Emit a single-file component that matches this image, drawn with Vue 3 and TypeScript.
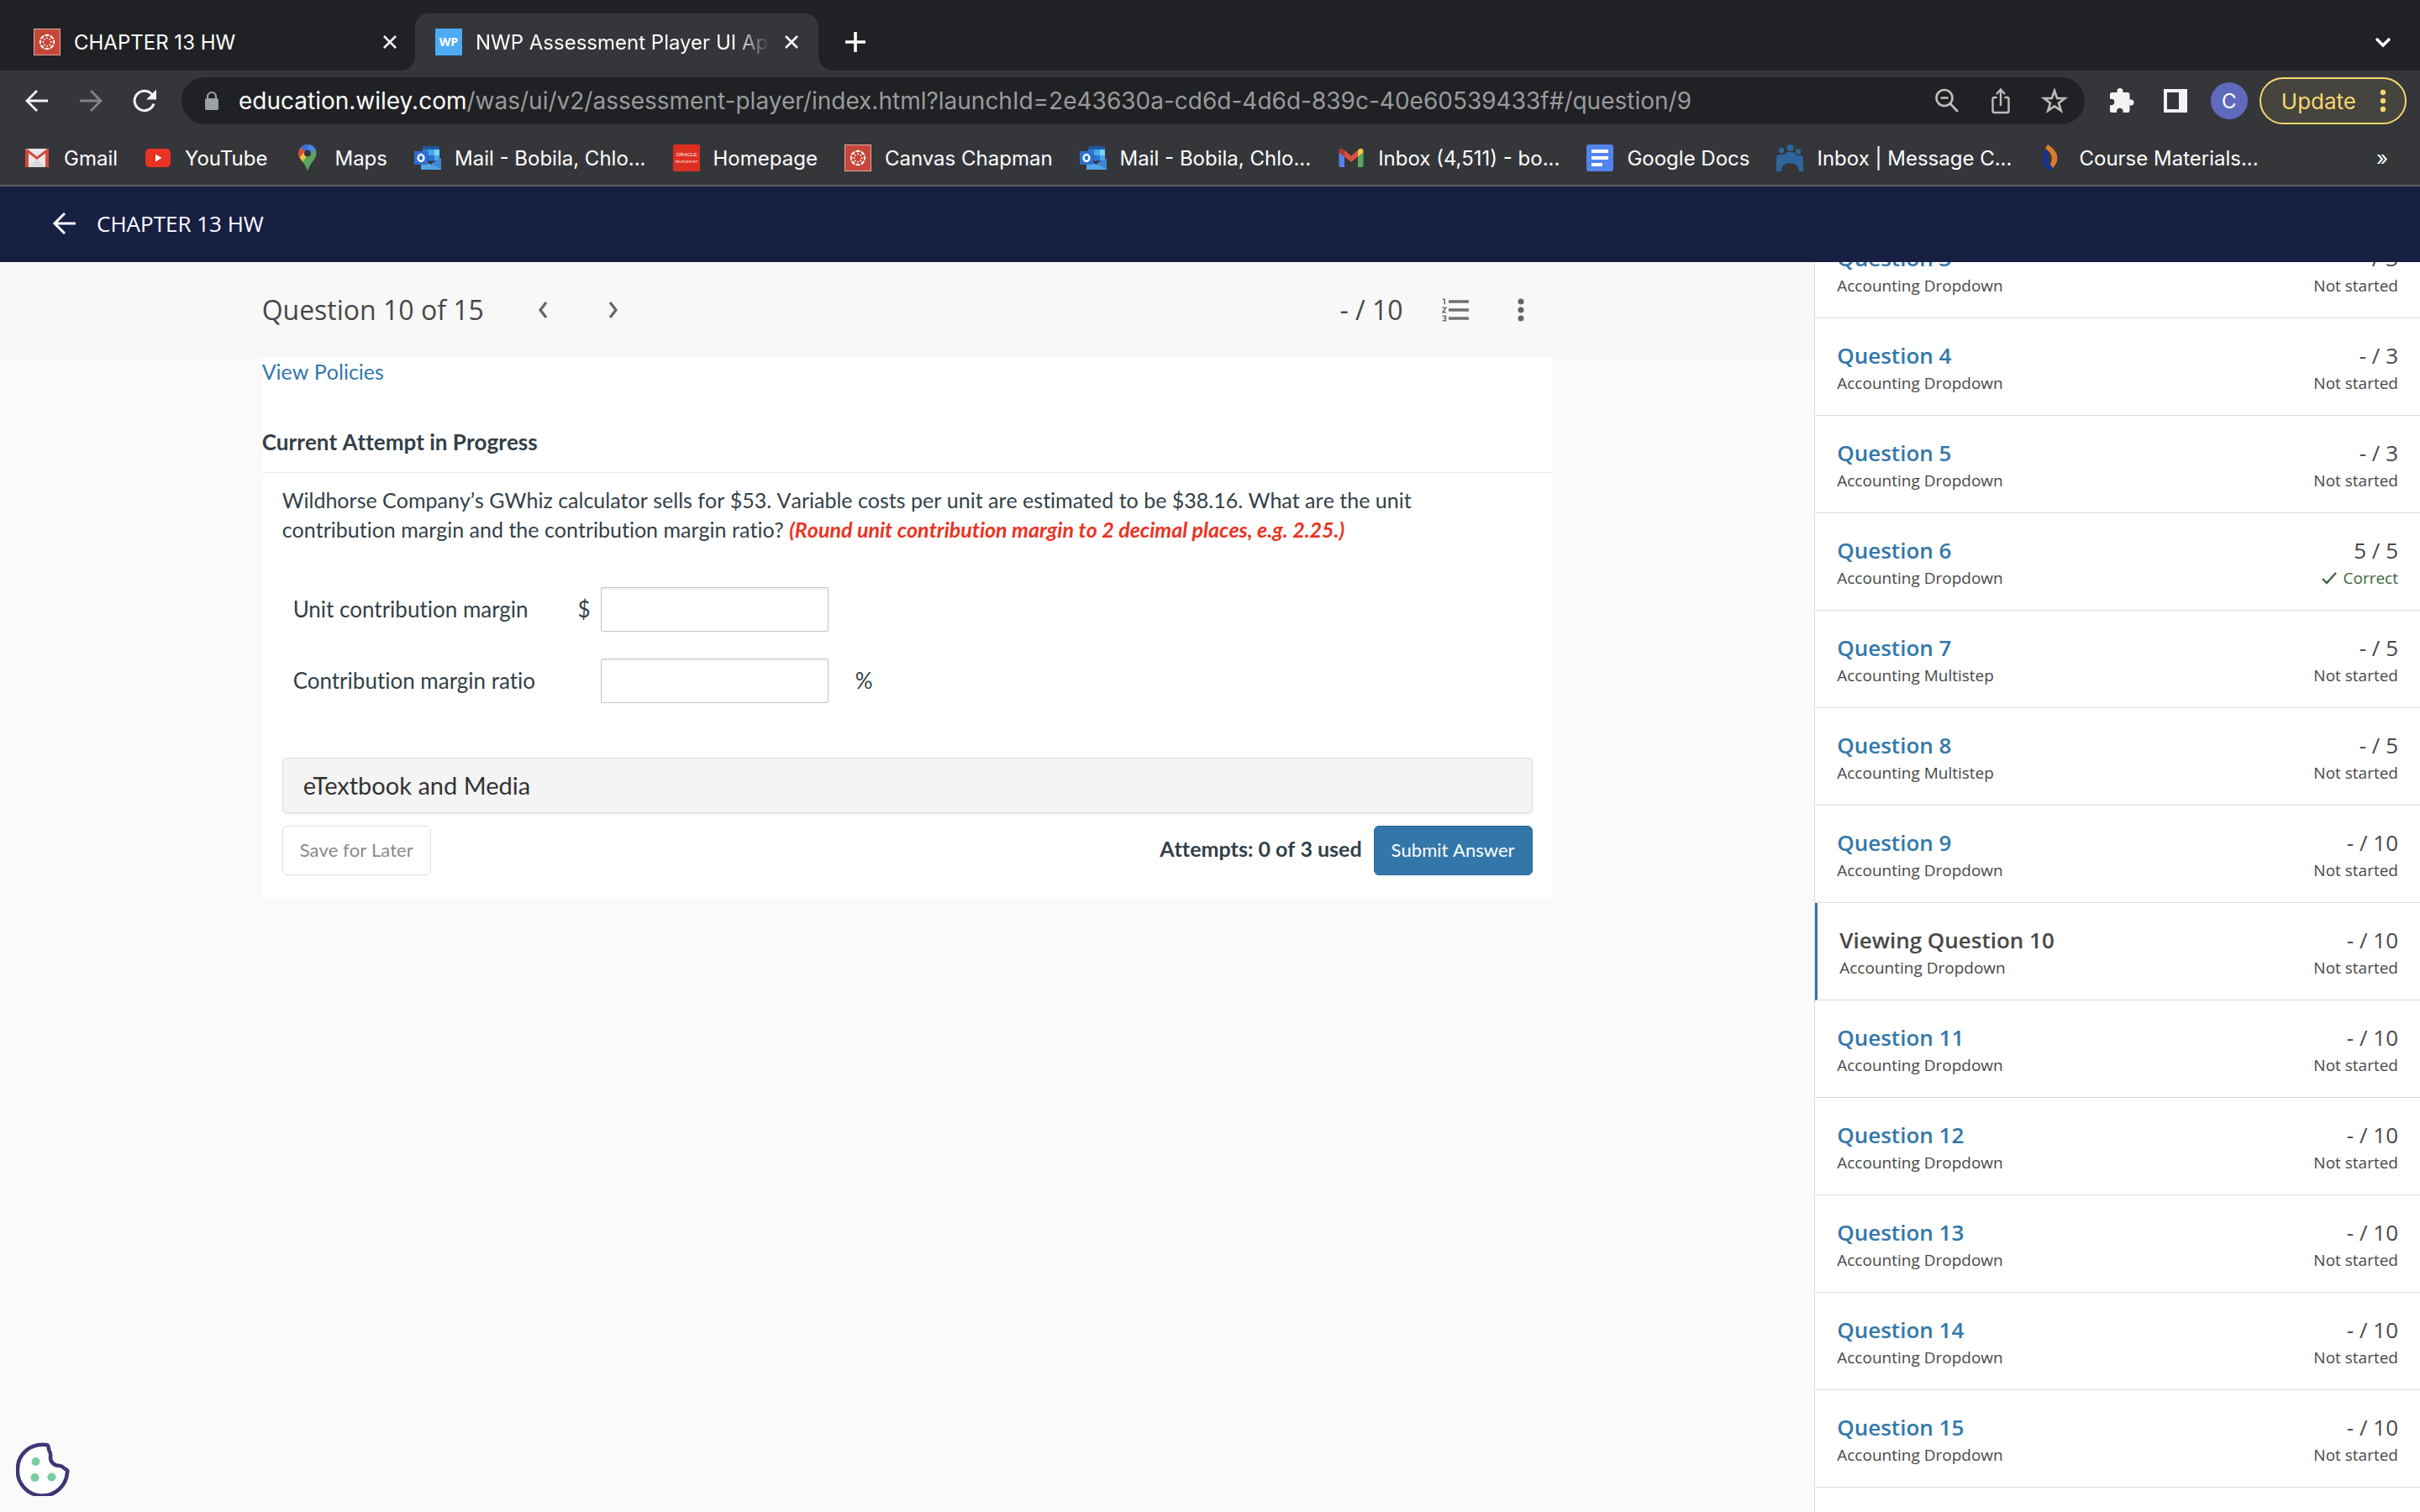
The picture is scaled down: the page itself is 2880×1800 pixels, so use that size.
<script setup lang="ts">
import { ref } from 'vue'

interface Bookmark {
  icon: string
  label: string
}

interface Question {
  id: number
  kind: string
  score: string
  status: string
}

const bookmarks: Bookmark[] = [
  { icon: 'gmail-old', label: 'Gmail' },
  { icon: 'youtube', label: 'YouTube' },
  { icon: 'maps', label: 'Maps' },
  { icon: 'outlook', label: 'Mail - Bobila, Chlo...' },
  { icon: 'oracle', label: 'Homepage' },
  { icon: 'canvas', label: 'Canvas Chapman' },
  { icon: 'outlook', label: 'Mail - Bobila, Chlo...' },
  { icon: 'gmail', label: 'Inbox (4,511) - bo...' },
  { icon: 'docs', label: 'Google Docs' },
  { icon: 'people', label: 'Inbox | Message C...' },
  { icon: 'course', label: 'Course Materials...' },
]

const drop = 'Accounting Dropdown'
const multi = 'Accounting Multistep'
const idle = 'Not started'

const questions: Question[] = [
  { id: 3, kind: drop, score: '- / 3', status: idle },
  { id: 4, kind: drop, score: '- / 3', status: idle },
  { id: 5, kind: drop, score: '- / 3', status: idle },
  { id: 6, kind: drop, score: '5 / 5', status: 'Correct' },
  { id: 7, kind: multi, score: '- / 5', status: idle },
  { id: 8, kind: multi, score: '- / 5', status: idle },
  { id: 9, kind: drop, score: '- / 10', status: idle },
  { id: 10, kind: drop, score: '- / 10', status: idle },
  { id: 11, kind: drop, score: '- / 10', status: idle },
  { id: 12, kind: drop, score: '- / 10', status: idle },
  { id: 13, kind: drop, score: '- / 10', status: idle },
  { id: 14, kind: drop, score: '- / 10', status: idle },
  { id: 15, kind: drop, score: '- / 10', status: idle },
]

const current = 10
const unitMargin = ref('')
const marginRatio = ref('')
const spokes = [0, 45, 90, 135, 180, 225, 270, 315]
</script>

<template>
  <div class="page">
    <svg class="defs" aria-hidden="true">
      <symbol id="i-canvas" viewBox="0 0 32 32">
        <rect width="32" height="32" fill="#e3a79f" />
        <rect x="1" y="1" width="30" height="30" fill="#c5473a" />
        <g fill="#fff">
          <template v-for="a in spokes" :key="a">
            <path d="M12.9 7.4a9.2 9.2 0 0 1 6.2 0a3.2 2.5 0 0 1-6.2 0z" :transform="`rotate(${a} 16 16)`" />
            <circle cx="16" cy="11.4" r="0.9" :transform="`rotate(${a} 16 16)`" />
          </template>
        </g>
      </symbol>
      <symbol id="i-gmail-old" viewBox="0 0 32 32">
        <rect x="2" y="5" width="28" height="22" rx="2" fill="#e9e9e9" />
        <path d="M5 27l11-9 11 9z" fill="#d9d9d9" />
        <path d="M2 7a2 2 0 0 1 2-2l12 9.500 12-9.500a2 2 0 0 1 2 2v18a2 2 0 0 1-2 2h-2V10.500L16 18 6 10.500V27H4a2 2 0 0 1-2-2z" fill="#d04a3e" />
      </symbol>
      <symbol id="i-youtube" viewBox="0 0 32 32">
        <rect x="1" y="5" width="30" height="22" rx="5" fill="#ea3323" />
        <path d="M13 11.500v9l7.500-4.500z" fill="#fff" />
      </symbol>
      <symbol id="i-maps" viewBox="0 0 32 32">
        <path d="M16 0C10 0 5.500 4.500 5.500 10.500c0 4 2 6.500 4.500 10 3 4 4.500 6.500 6 11.500 1.500-5 3-7.500 6-11.500 2.500-3.500 4.500-6 4.500-10C26.500 4.500 22 0 16 0z" fill="#58a55c" />
        <path d="M5.500 10.500c0 4 2 6.500 4.500 10l10-12L12 7 7 8z" fill="#f1bd42" />
        <path d="M8 3.700a10.500 10.500 0 0 0-2.500 6.800c0 1.800.4 3.300 1 4.700L13 8z" fill="#d85140" />
        <path d="M8 3.700A10.400 10.400 0 0 1 19.300.600L13 8z" fill="#3b6fd8" />
        <path d="M19.300.600a10.500 10.500 0 0 1 6 5L19 13 13 8z" fill="#5383ec" />
        <circle cx="16" cy="10.500" r="4" fill="#35363a" />
      </symbol>
      <symbol id="i-outlook" viewBox="0 0 32 32">
        <rect x="10" y="2" width="20" height="18" fill="#2056a0" />
        <rect x="10" y="6" width="7" height="6" fill="#2f7fd6" />
        <rect x="17" y="6" width="7" height="7" fill="#4aa7e8" />
        <rect x="24" y="6" width="6" height="7" fill="#77d4fb" />
        <rect x="17" y="13" width="7" height="6" fill="#2b76cf" />
        <rect x="24" y="13" width="6" height="6" fill="#4aa7e8" />
        <path d="M8 30V18l12 6 12-7v13z" fill="#52a7e3" />
        <path d="M20 23l12-7v14z" fill="#4086d6" />
        <rect y="8" width="16" height="16" rx="1" fill="#2f6fce" />
        <ellipse cx="8" cy="16" rx="3.400" ry="4" fill="none" stroke="#fff" stroke-width="2.400" />
      </symbol>
      <symbol id="i-gmail" viewBox="0 0 32 32">
        <path d="M1.500 9v16a2 2 0 0 0 2 2H8V13z" fill="#5383ec" />
        <path d="M30.500 9v16a2 2 0 0 1-2 2H24V13z" fill="#58a55c" />
        <path d="M8 7l8 6.500L24 7v7.500L16 21l-8-6.500z" fill="#d85140" />
        <path d="M8 7v7.500L1.500 9.500V8c0-3 3-4.200 5-2.500z" fill="#b3362b" />
        <path d="M24 7v7.500l6.500-5V8c0-3-3-4.200-5-2.500z" fill="#f4c343" />
      </symbol>
      <symbol id="i-docs" viewBox="0 0 32 32">
        <rect width="32" height="32" rx="3" fill="#5383ec" />
        <path d="M6 6h20v4H6zM6 14h20v4H6zM6 22h13v4H6z" fill="#fff" />
      </symbol>
      <symbol id="i-people" viewBox="0 0 32 32">
        <g fill="#2d659c">
          <circle cx="6" cy="7" r="3.200" />
          <circle cx="16.500" cy="4" r="4" />
          <circle cx="26" cy="8.500" r="3.200" />
          <path d="M0 32V16q0-4 4-4h6q1-3 3-3h7q2 0 3 4h5q4 0 4 4v15h-5q-1-10-11-10T6 32z" />
        </g>
      </symbol>
      <symbol id="i-course" viewBox="0 0 32 32">
        <path d="M10 5C4 10 3 19 8 27l4 5 5-4c-7-7-7-14-4-20z" fill="#17338c" />
        <path d="M11 0l-3 5c7 4 10 10 6 19l3 4c9-9 7-20-6-28z" fill="#dc7a2b" />
      </symbol>
    </svg>

    <header class="browser">
      <div class="tabs">
        <div class="tab tab-idle">
          <svg class="i32"><use href="#i-canvas" /></svg>
          <span class="tab-title">CHAPTER 13 HW</span>
          <button class="ghost" type="button" aria-label="Close tab">
            <svg class="i16" viewBox="0 0 16 16"><path d="M1 1l14 14M15 1L1 15" stroke="#f1f3f4" stroke-width="2.600" /></svg>
          </button>
        </div>
        <div class="tab tab-active">
          <span class="wp">WP</span>
          <span class="tab-title fade">NWP Assessment Player UI App</span>
          <button class="ghost" type="button" aria-label="Close tab">
            <svg class="i16" viewBox="0 0 16 16"><path d="M1 1l14 14M15 1L1 15" stroke="#f1f3f4" stroke-width="2.600" /></svg>
          </button>
        </div>
        <button class="ghost new-tab" type="button" aria-label="New tab">
          <svg class="i24" viewBox="0 0 24 24"><path d="M12 0v24M0 12h24" stroke="#fff" stroke-width="3.600" /></svg>
        </button>
        <button class="ghost tab-search" type="button" aria-label="Search tabs">
          <svg class="i24" viewBox="0 0 24 24"><path d="M4 8l8 8 8-8" fill="none" stroke="#fff" stroke-width="3.400" /></svg>
        </button>
      </div>

      <div class="toolbar">
        <div class="nav">
          <button class="ghost" type="button" aria-label="Back">
            <svg class="i32" viewBox="0 0 32 32"><path d="M29 16H5M16 4L4 16l12 12" fill="none" stroke="#f1f3f4" stroke-width="2.800" /></svg>
          </button>
          <button class="ghost" type="button" aria-label="Forward">
            <svg class="i32" viewBox="0 0 32 32"><path d="M3 16h24M16 4l12 12-12 12" fill="none" stroke="#828386" stroke-width="2.800" /></svg>
          </button>
          <button class="ghost" type="button" aria-label="Reload">
            <svg class="i32" viewBox="0 0 32 32"><path d="M27 19.500A11.700 11.700 0 1 1 24.500 8" fill="none" stroke="#f1f3f4" stroke-width="3" /><path d="M30 2.500v12H18z" fill="#f1f3f4" /></svg>
          </button>
        </div>
        <div class="omnibox">
          <svg class="i24" viewBox="0 0 24 24"><path d="M7 11V7a5 5 0 0 1 10 0v4" fill="none" stroke="#9aa0a6" stroke-width="2.200" /><rect x="4" y="9" width="16" height="14" rx="2" fill="#9aa0a6" /></svg>
          <span class="url"><b>education.wiley.com</b>/was/ui/v2/assessment-player/index.html?launchId=2e43630a-cd6d-4d6d-839c-40e60539433f#/question/9</span>
          <button class="ghost" type="button" aria-label="Zoom">
            <svg class="i32" viewBox="0 0 32 32"><g fill="none" stroke="#bdbdbe" stroke-width="2.600"><circle cx="13" cy="12.500" r="9.500" /><path d="M19.500 19l9.500 10M8.500 12.500h9" /></g></svg>
          </button>
          <button class="ghost" type="button" aria-label="Share">
            <svg class="i32" viewBox="0 0 32 32"><g fill="none" stroke="#bdbdbe" stroke-width="2.400"><path d="M11.500 12H8.500a2 2 0 0 0-2 2v14a2 2 0 0 0 2 2h15a2 2 0 0 0 2-2V14a2 2 0 0 0-2-2h-3M16 22V3M11 8l5-5.500L21 8" /></g></svg>
          </button>
          <button class="ghost" type="button" aria-label="Bookmark this page">
            <svg class="i32" viewBox="0 0 32 32"><path d="M16 4l3.100 8.900 9.400.2-7.500 5.700 2.800 9-7.800-5.400-7.800 5.400 2.800-9-7.500-5.700 9.400-.2z" fill="none" stroke="#bdbdbe" stroke-width="2.600" /></svg>
          </button>
        </div>
        <div class="tools">
          <button class="ghost" type="button" aria-label="Extensions">
            <svg class="i32" viewBox="0 0 32 32"><path d="M27 14.500h-1.500V8.500a2.500 2.500 0 0 0-2.500-2.500h-5.500V4.500a3.500 3.500 0 0 0-7 0V6H4.500A2.500 2.500 0 0 0 2 8.500v5.200h1.500a3.800 3.800 0 0 1 0 7.600H2v6.200A2.500 2.500 0 0 0 4.500 30H10v-1.500a3.800 3.800 0 0 1 7.600 0V30H23a2.500 2.500 0 0 0 2.500-2.500v-6H27a3.500 3.500 0 0 0 0-7z" fill="#f1f3f4" /></svg>
          </button>
          <button class="ghost" type="button" aria-label="Side panel">
            <svg class="i32" viewBox="0 0 32 32"><path d="M2 2h28v28H2zm4 4v20h14V6z" fill="#f1f3f4" fill-rule="evenodd" /></svg>
          </button>
        </div>
        <button class="avatar" type="button">C</button>
        <button class="update" type="button">
          Update
          <svg class="i32" viewBox="0 0 32 32"><g fill="#f7d66e"><circle cx="16" cy="6" r="3.200" /><circle cx="16" cy="16" r="3.200" /><circle cx="16" cy="26" r="3.200" /></g></svg>
        </button>
      </div>

      <nav class="bookmarks">
        <a v-for="(b, i) in bookmarks" :key="i" class="bookmark" href="#">
          <svg v-if="b.icon === 'oracle'" class="i32" viewBox="0 0 32 32">
            <rect width="32" height="32" rx="2" fill="#dd2f21" />
            <text x="16" y="14" text-anchor="middle" font-family="Liberation Sans, sans-serif" font-size="6" fill="#fff">ORACLE</text>
            <text x="16" y="22" text-anchor="middle" font-family="Liberation Sans, sans-serif" font-size="4" fill="#fff">PEOPLESOFT</text>
          </svg>
          <svg v-else class="i32"><use :href="`#i-${b.icon}`" /></svg>
          <span>{{ b.label }}</span>
        </a>
        <button class="ghost more" type="button" aria-label="More bookmarks">»</button>
      </nav>
    </header>

    <div class="course-bar">
      <button class="ghost" type="button" aria-label="Back to course">
        <svg class="i32" viewBox="0 0 32 32"><path d="M29 16H5M16 4L4 16l12 12" fill="none" stroke="#fff" stroke-width="3" /></svg>
      </button>
      <h1>CHAPTER 13 HW</h1>
    </div>

    <div class="body">
      <main class="main">
        <div class="question-bar">
          <div class="column bar-inner">
            <h2>Question 10 of 15</h2>
            <div class="pager">
              <button class="ghost" type="button" aria-label="Previous question">
                <svg class="i32" viewBox="0 0 32 32"><path d="M20 7l-7 9 7 9" fill="none" stroke="#666" stroke-width="3.200" /></svg>
              </button>
              <button class="ghost" type="button" aria-label="Next question">
                <svg class="i32" viewBox="0 0 32 32"><path d="M12 7l7 9-7 9" fill="none" stroke="#666" stroke-width="3.200" /></svg>
              </button>
            </div>
            <span class="score">- / 10</span>
            <button class="ghost" type="button" aria-label="Question list">
              <svg class="i32" viewBox="0 0 32 32">
                <path d="M8 6h24M8 16h24M8 26h24" stroke="#707070" stroke-width="3.400" />
                <path d="M1 3.200h2.200V9.500M.500 13.200h4.300L.800 18.800h4.500M.500 23.200h4v5.600h-4M2 26h2.500" fill="none" stroke="#707070" stroke-width="1.600" />
              </svg>
            </button>
            <button class="ghost" type="button" aria-label="More options">
              <svg class="i32" viewBox="0 0 32 32"><g fill="#666"><circle cx="16" cy="6" r="3.500" /><circle cx="16" cy="16" r="3.500" /><circle cx="16" cy="26" r="3.500" /></g></svg>
            </button>
          </div>
        </div>

        <article class="column card">
          <a class="policies" href="#">View Policies</a>
          <h3>Current Attempt in Progress</h3>
          <section class="problem">
            <p>
              Wildhorse Company’s GWhiz calculator sells for $53. Variable costs per unit are estimated to be $38.16. What are the unit contribution margin and the contribution margin ratio?
              <em>(Round unit contribution margin to 2 decimal places, e.g. 2.25.)</em>
            </p>
            <div class="answers">
              <div class="answer">
                <label for="unit-margin">Unit contribution margin</label>
                <span class="prefix">$</span>
                <input id="unit-margin" v-model="unitMargin" type="text" />
              </div>
              <div class="answer">
                <label for="margin-ratio">Contribution margin ratio</label>
                <span class="prefix"></span>
                <input id="margin-ratio" v-model="marginRatio" type="text" />
                <span class="suffix">%</span>
              </div>
            </div>
            <button class="media" type="button">eTextbook and Media</button>
            <div class="actions">
              <button class="btn save" type="button">Save for Later</button>
              <strong>Attempts: 0 of 3 used</strong>
              <button class="btn submit" type="button">Submit Answer</button>
            </div>
          </section>
        </article>

        <button class="ghost cookie" type="button" aria-label="Cookie preferences">
          <svg viewBox="0 0 64 64">
            <path d="M36 3C17 1 2 14 2 32a29.500 29.500 0 0 0 59 4c1-2 0-3-2-4-3-1-3-4-7-4-6 0-11-4-11-10 0-3 1-4-1-7s0-8-4-8z" fill="#fff" stroke="#3c3775" stroke-width="4.500" stroke-linejoin="round" />
            <g fill="#77cf9c"><circle cx="23.500" cy="23" r="5" /><circle cx="22.500" cy="42" r="5" /><circle cx="42.500" cy="41.500" r="5" /></g>
          </svg>
        </button>
      </main>

      <aside class="side">
        <ul>
          <li v-for="q in questions" :key="q.id" :class="{ active: q.id === current }">
            <div>
              <strong v-if="q.id === current" class="name">Viewing Question {{ q.id }}</strong>
              <a v-else class="name" href="#">Question {{ q.id }}</a>
              <span class="small">{{ q.kind }}</span>
            </div>
            <div class="result">
              <span class="points">{{ q.score }}</span>
              <span class="small" :class="{ correct: q.status === 'Correct' }">
                <svg v-if="q.status === 'Correct'" class="tick" viewBox="0 0 18 18"><path d="M1 10l5 5L17 3" fill="none" stroke="#3c6639" stroke-width="2.400" /></svg>
                {{ q.status }}
              </span>
            </div>
          </li>
        </ul>
      </aside>
    </div>
  </div>
</template>

<style>
html,
body {
  background: #fafafa;
}
</style>

<style scoped>
* {
  box-sizing: border-box;
}
.page {
  display: flex;
  flex-direction: column;
  height: 100vh;
  overflow: hidden;
  font-family: "Open Sans", sans-serif;
  color: #484848;
}
.defs {
  position: absolute;
  width: 0;
  height: 0;
}
button {
  font: inherit;
  cursor: pointer;
}
a {
  text-decoration: none;
}
svg {
  display: block;
  flex: none;
}
.ghost {
  display: flex;
  padding: 0;
  border: 0;
  background: none;
  color: inherit;
}
.i16 { width: 16px; height: 16px; }
.i24 { width: 24px; height: 24px; }
.i32 { width: 32px; height: 32px; }

/* browser frame */
.browser {
  flex: none;
  background: #35363a;
  border-bottom: 2px solid #5f6063;
  font-family: "Inter", sans-serif;
  color: #fff;
}
.tabs {
  display: flex;
  align-items: flex-end;
  height: 84px;
  background: #202124;
}
.tab {
  display: flex;
  align-items: center;
  gap: 16px;
  height: 68px;
  font-size: 24px;
}
.tab-idle {
  width: 494px;
  padding: 0 22px 0 40px;
}
.tab-active {
  position: relative;
  width: 480px;
  padding: 0 24px;
  border-radius: 16px 16px 0 0;
  background: #35363a;
}
.tab-active::before,
.tab-active::after {
  content: "";
  position: absolute;
  bottom: 0;
  width: 16px;
  height: 16px;
}
.tab-active::before {
  right: 100%;
  background: radial-gradient(circle at 0 0, #202124 15px, #35363a 16px);
}
.tab-active::after {
  left: 100%;
  background: radial-gradient(circle at 100% 0, #202124 15px, #35363a 16px);
}
.tab-title {
  flex: 1;
  min-width: 0;
  overflow: hidden;
  white-space: nowrap;
}
.fade {
  margin-right: 2px;
  -webkit-mask-image: linear-gradient(to right, #000 88%, transparent);
  mask-image: linear-gradient(to right, #000 88%, transparent);
}
.wp {
  width: 32px;
  height: 32px;
  background: #4dabf5;
  font: 700 14px/32px "Open Sans", sans-serif;
  text-align: center;
}
.new-tab,
.tab-search {
  height: 68px;
  align-items: center;
}
.new-tab {
  margin-left: 32px;
}
.tab-search {
  margin: 0 32px 0 auto;
}
.toolbar {
  display: flex;
  align-items: center;
  padding: 8px 16px 8px 28px;
}
.nav {
  display: flex;
  gap: 32px;
}
.omnibox {
  display: flex;
  flex: 1;
  align-items: center;
  gap: 32px;
  min-width: 0;
  height: 56px;
  margin: 0 28px;
  padding: 0 20px 0 24px;
  border-radius: 28px;
  background: #202124;
}
.url {
  flex: 1;
  min-width: 0;
  margin-left: -12px;
  overflow: hidden;
  white-space: nowrap;
  font-size: 28px;
  line-height: 40px;
  color: #9a9b9d;
}
.url b {
  font-weight: 400;
  color: #fff;
}
.tools {
  display: flex;
  gap: 32px;
}
.avatar {
  width: 44px;
  height: 44px;
  margin: 0 14px 0 26px;
  padding: 0;
  border: 0;
  border-radius: 50%;
  background: #5f6abc;
  color: #fff;
  font-size: 24px;
}
.update {
  display: flex;
  align-items: center;
  gap: 16px;
  height: 56px;
  padding: 0 10px 0 24px;
  border: 2px solid #f7d66e;
  border-radius: 28px;
  background: #45443f;
  color: #f7d66e;
  font-size: 26px;
}
.bookmarks {
  display: flex;
  align-items: center;
  gap: 32px;
  height: 64px;
  padding: 0 38px 0 28px;
  font-size: 24px;
}
.bookmark {
  display: flex;
  align-items: center;
  gap: 16px;
  color: #fff;
  white-space: nowrap;
}
.more {
  margin-left: auto;
}

/* course bar */
.course-bar {
  display: flex;
  flex: none;
  align-items: center;
  gap: 22px;
  height: 90px;
  padding: 0 61px 2px;
  background: #171f43;
  color: #fff;
}
.course-bar h1 {
  margin: 0;
  font-size: 26px;
  font-weight: 400;
}

/* question column */
.body {
  display: flex;
  flex: 1;
  min-height: 0;
}
.main {
  position: relative;
  flex: 3;
  min-width: 0;
}
.column {
  max-width: 1536px;
  margin: 0 auto;
}
.question-bar {
  background: #f8f8f8;
}
.bar-inner {
  display: flex;
  align-items: center;
  gap: 46px;
  height: 113px;
  padding-right: 22px;
  font-size: 32px;
}
.bar-inner h2 {
  margin: 0;
  font-size: 32px;
  font-weight: 400;
}
.pager {
  display: flex;
  gap: 52px;
  margin-left: 8px;
}
.score {
  margin-left: auto;
}
.card {
  padding-bottom: 28px;
  background: #fff;
  font-family: "Lato", sans-serif;
  font-size: 25px;
  font-variant-ligatures: none;
  font-kerning: none;
  line-height: 35px;
  color: #333f48;
}
.policies {
  display: block;
  color: #3378ab;
}
.card h3 {
  margin: 49px 0 0;
  padding-bottom: 18px;
  border-bottom: 1px solid #ebebeb;
  font-size: 26px;
  line-height: 35px;
}
.problem {
  padding: 15px 24px 0;
}
.problem p {
  max-width: 1400px;
  margin: 0;
}
.problem em {
  font-weight: 700;
  color: #ea3323;
}
.answers {
  display: flex;
  flex-direction: column;
  gap: 32px;
  padding: 51px 13px 65px;
  font-size: 26px;
  font-kerning: normal;
}
.answer {
  display: flex;
  align-items: center;
}
.answer label {
  width: 326px;
}
.prefix {
  width: 28px;
  text-align: right;
}
.answer input {
  width: 271px;
  height: 53px;
  margin: 0 32px 0 12px;
  padding: 0 12px;
  border: 1px solid #c4c4c4;
  border-radius: 2px;
  background: #fff;
  box-shadow: inset 0 2px 3px rgba(0, 0, 0, 0.07);
  font: inherit;
}
.media {
  display: block;
  width: 100%;
  height: 66px;
  padding: 0 24px 2px;
  border: 1px solid #dcdcdc;
  border-radius: 5px;
  background: #f4f4f4;
  box-shadow: 0 2px 2px rgba(0, 0, 0, 0.05);
  color: #333;
  font-size: 29px;
  font-kerning: normal;
  text-align: left;
}
.actions {
  display: flex;
  align-items: center;
  gap: 14px;
  margin-top: 15px;
}
.actions strong {
  margin-left: auto;
  padding-bottom: 4px;
}
.btn {
  height: 59px;
  padding: 0 20px 2px;
  border: 1px solid #ddd;
  border-radius: 6px;
  font-size: 22px;
}
.save {
  background: #fff;
  color: #8a8a8a;
}
.submit {
  border-color: #2a6896;
  background: #3377aa;
  color: #fff;
}
.cookie {
  position: absolute;
  bottom: 19px;
  left: 19px;
}
.cookie svg {
  width: 64px;
  height: 64px;
}

/* question list */
.side {
  flex: 1;
  min-width: 0;
  overflow: hidden;
  border-left: 1px solid #dcdcdc;
  background: #fff;
}
.side ul {
  margin: -49px 0 0;
  padding: 0;
  list-style: none;
}
.side li {
  display: flex;
  justify-content: space-between;
  padding: 27px 26px 22px;
  border-bottom: 1px solid #dcdcdc;
}
.side .active {
  border-left: 3px solid #3377aa;
}
.name,
.points {
  display: block;
  font-size: 26px;
  line-height: 34px;
}
.name {
  font-weight: 600;
}
a.name {
  color: #3378ab;
}
.small {
  display: block;
  font-size: 19px;
  line-height: 32px;
}
.result {
  text-align: right;
}
.correct {
  display: flex;
  align-items: center;
  justify-content: flex-end;
  gap: 8px;
  color: #3c6639;
}
.tick {
  width: 18px;
  height: 18px;
}
</style>
